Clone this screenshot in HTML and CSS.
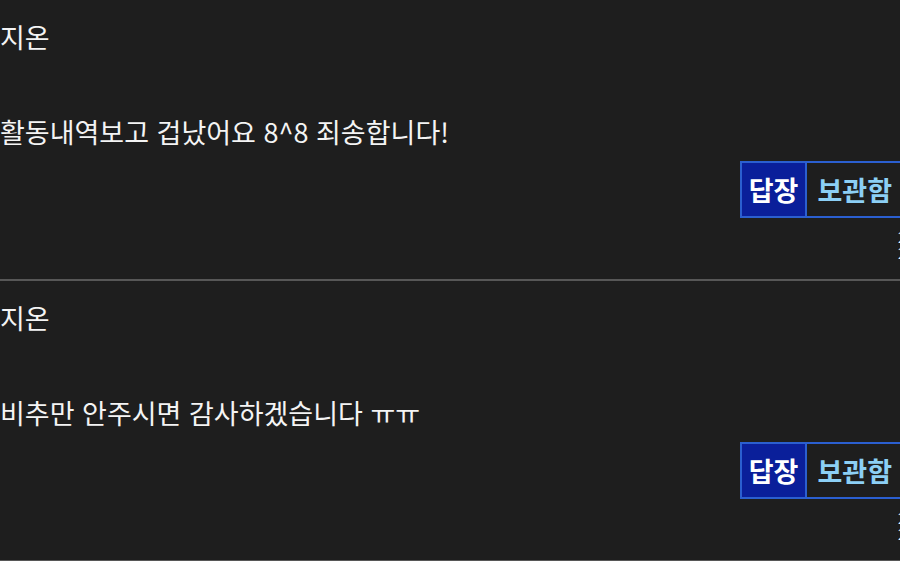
FILE: index.html
```html
<!DOCTYPE html>
<html lang="ko">
<head>
<meta charset="utf-8">
<link rel="stylesheet" href="styles.css">
</head>
<body>
<div class="list">
  <div class="item">
    <div class="name">지온</div>
    <div class="msg">활동내역보고 겁났어요 8^8 죄송합니다!</div>
    <div class="actions">
      <button class="btn reply">답장</button>
      <button class="btn keep">보관함</button>
    </div>
    <div class="meta"><span>2024.</span><span>21:30</span></div>
  </div>
  <div class="item">
    <div class="name">지온</div>
    <div class="msg">비추만 안주시면 감사하겠습니다 ㅠㅠ</div>
    <div class="actions">
      <button class="btn reply">답장</button>
      <button class="btn keep">보관함</button>
    </div>
    <div class="meta"><span>2024.</span><span>21:28</span></div>
  </div>
</div>
</body>
</html>
```
FILE: styles.css
```css
html, body {
  margin: 0;
  padding: 0;
  background: #1e1e1e;
  overflow: hidden;
}
body {
  width: 900px;
  height: 561px;
  font-family: "Noto Sans CJK KR", "Noto Sans", sans-serif;
  color: #f4f4f4;
}
.list {
  width: 904px;
}
.item {
  box-sizing: border-box;
  height: 281px;
  padding-top: 19px;
  border-bottom: 2px solid #575757;
}
.name {
  font-size: 27px;
  line-height: 36px;
  font-weight: 400;
}
.msg {
  margin-top: 59px;
  font-size: 27px;
  line-height: 36px;
  font-weight: 400;
}
.actions {
  margin-top: 11px;
  display: flex;
  justify-content: flex-end;
}
.btn {
  height: 57px;
  box-sizing: border-box;
  border: 2px solid #2b5fd0;
  font-family: "Noto Sans CJK KR", "Noto Sans", sans-serif;
  font-weight: 700;
  font-size: 27px;
  line-height: 1;
  padding: 0 7px;
  margin: 0;
  border-radius: 0;
}
.reply {
  background: #0a1f9a;
  color: #ffffff;
}
.keep {
  background: transparent;
  color: #8ccff5;
  border-left: none;
  padding: 0 10px 0 10px;
}
.meta {
  margin-top: 11px;
  padding-left: 898px;
  font-size: 14px;
  line-height: 16px;
  white-space: nowrap;
  color: #f4f4f4;
  display: flex;
  flex-direction: column;
}
```
